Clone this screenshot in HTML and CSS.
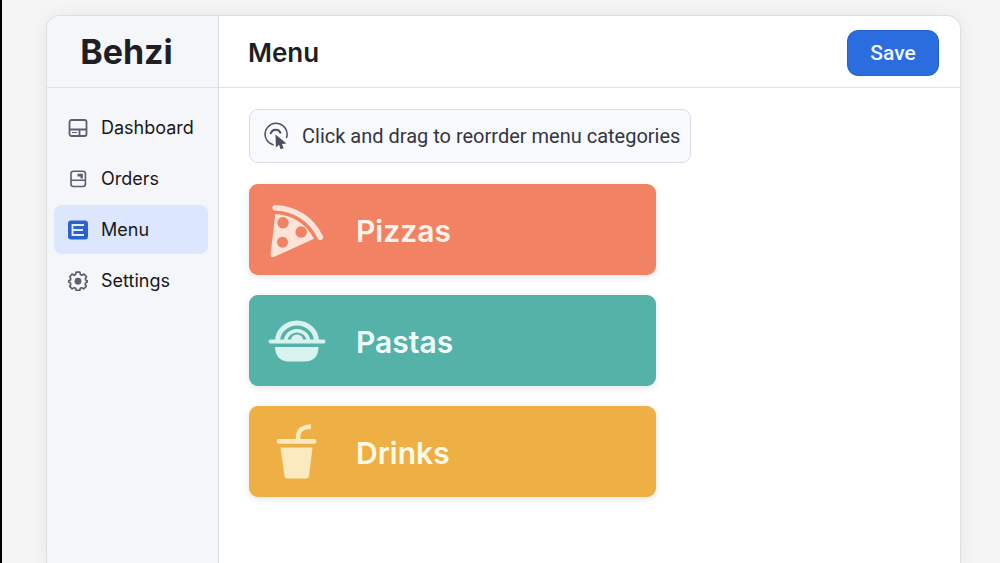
FILE: index.html
```html
<!DOCTYPE html>
<html lang="en">
<head>
<meta charset="utf-8">
<meta name="viewport" content="width=device-width, initial-scale=1">
<title>Behzi – Menu</title>
<link rel="stylesheet" href="styles.css">
</head>
<body>
<div class="app">
  <aside class="sidebar">
    <div class="brand">Behzi</div>
    <nav class="nav">
      <a class="nav-link" href="#dashboard">
        <svg class="nav-icon" viewBox="0 0 20 20" fill="none" stroke="#5b606e" stroke-width="1.8"><rect x="1.5" y="2" width="17" height="16" rx="2"/><path d="M1.5 11.5h17M11.5 11.5V18"/><path d="M4 14.5h5" stroke-width="1.2"/></svg>
        Dashboard
      </a>
      <a class="nav-link" href="#orders">
        <svg class="nav-icon" viewBox="0 0 20 20" fill="none" stroke="#5b606e" stroke-width="1.6"><rect x="3" y="2.3" width="14.4" height="15.2" rx="2.4"/><path d="M3 11.3h14.4"/><path d="M9.5 4.800h5.400v4.800h-2.400V7.400H9.500z" fill="#5b606e" stroke="none"/></svg>
        Orders
      </a>
      <a class="nav-link active" href="#menu" aria-current="page">
        <svg class="nav-icon" viewBox="0 0 20 20"><rect x="0" y="0.5" width="20" height="19" rx="3" fill="#2a63d0"/><path d="M16 5H4.500v10H16M4.500 10H15" fill="none" stroke="#e6efff" stroke-width="1.8"/></svg>
        Menu
      </a>
      <a class="nav-link" href="#settings">
        <svg class="nav-icon" viewBox="0 0 20 20"><path d="M8.100 1.200h3.800l.5 2.400 1.500.7 2.200-1.200 2.400 2.700-1.200 2 .5 1.400 1.700.7v1l-1.800.8-.5 1.500 1.100 2-2.500 2.600-2.100-1.100-1.400.6-.5 2H8.200l-.5-2-1.500-.6-2.100 1.100-2.500-2.600 1.200-2-.6-1.500L.6 11V9.800l1.700-.7.5-1.400-1.100-2 2.400-2.700 2.100 1.300 1.400-.7z" fill="none" stroke="#5b606e" stroke-width="1.700" stroke-linejoin="round"/><circle cx="10" cy="10.200" r="3.400" fill="#5b606e"/></svg>
        Settings
      </a>
    </nav>
  </aside>
  <main class="main">
    <header class="topbar">
      <h1 class="title">Menu</h1>
      <button class="save" type="button">Save</button>
    </header>
    <div class="content">
      <p class="hint">
        <svg class="hint-icon" viewBox="0 0 26 30"><g fill="none" stroke="#4b4f62" stroke-width="1.500" stroke-linecap="round"><path d="M9 23.800A11 11 0 1 1 22.600 16.500"/><path d="M6.800 12.300a5.200 5.200 0 0 1 9.600-.6" stroke-width="2"/></g><path d="M11.500 13.500l.4 13 3.200-2.800 1.500 4.600 3-1-1.600-4.400 4.500-.4z" fill="#4b4f62"/></svg>
        Click and drag to reorrder menu categories
      </p>
      <ul class="categories">
        <li class="category pizzas">
          <svg class="category-icon" viewBox="-1 -2 58 58"><path d="M7 4.500C26 5.500 42 15 50.500 33" fill="none" stroke="currentColor" stroke-width="5.500" stroke-linecap="round"/><path fill="currentColor" fill-rule="evenodd" d="M7 10.500C24 11.500 37 20 44.500 34.500L6 52q-4 1.200-3.500-2.500zM14.500 13.500a5.500 5.500 0 1 0 .01 0zM32 22.500a5.500 5.500 0 1 0 .01 0zM14 32.500a5.300 5.300 0 1 0 .01 0z"/></svg>
          Pizzas
        </li>
        <li class="category pastas">
          <svg class="category-icon" viewBox="-1 0 60 60"><g fill="none" stroke="currentColor"><path d="M9.500 29.500a19.500 18.500 0 0 1 39 0" stroke-width="5"/><path d="M17.500 29.500a11.500 10.800 0 0 1 23 0" stroke-width="3.500"/><path d="M2.500 29.500h53" stroke-width="4" stroke-linecap="round"/></g><path d="M23 28a6 5.500 0 0 1 12 0z" fill="currentColor"/><path d="M7 35h43.500q0 14-14 14.500H21Q7.500 49 7 35z" fill="currentColor"/></svg>
          Pastas
        </li>
        <li class="category drinks">
          <svg class="category-icon" viewBox="-1 2 60 60"><path d="M30 18c0-9 3-11.500 13-12.500" fill="none" stroke="currentColor" stroke-width="4.500"/><rect x="8.500" y="18" width="40" height="4.800" rx="2.400" fill="currentColor"/><path d="M12.500 26.500h32L41 55q-.4 2.500-3 2.500H19.500q-2.700 0-3-2.500z" fill="currentColor"/></svg>
          Drinks
        </li>
      </ul>
    </div>
  </main>
</div>
</body>
</html>
```
FILE: styles.css
```css
* {
  box-sizing: border-box;
}

body {
  display: flex;
  min-height: 100vh;
  margin: 0;
  padding: 15px 39px 0 44px;
  border-left: 2px solid #000;
  background: #f5f5f5;
  color: #1e1f24;
  font-family: Inter, "Liberation Sans", sans-serif;
}

.app {
  display: flex;
  flex: 1;
  border: 1px solid #dddee1;
  border-bottom: 0;
  border-radius: 14px 14px 0 0;
  background: #fff;
  box-shadow: 0 2px 18px rgba(0, 0, 0, 0.07);
  overflow: hidden;
}

.sidebar {
  flex: 0 0 172px;
  border-right: 1px solid #dcdde1;
  background: #f5f6f9;
}

.brand,
.topbar {
  display: flex;
  align-items: center;
  height: 72px;
  border-bottom: 1px solid #e1e2e5;
}

.brand {
  justify-content: center;
  padding-right: 12px;
  font-size: 34px;
  font-weight: 700;
}

.nav {
  display: flex;
  flex-direction: column;
  gap: 2px;
  padding: 15px 10px 15px 7px;
}

.nav-link {
  display: flex;
  align-items: center;
  gap: 13px;
  height: 49px;
  padding: 0 14px;
  border-radius: 8px;
  color: #17181c;
  font-size: 18px;
  text-decoration: none;
}

.nav-link.active {
  background: #dce6fe;
}

.nav-icon {
  flex: none;
  width: 20px;
  height: 20px;
}

.main {
  flex: 1;
}

.topbar {
  justify-content: space-between;
  padding: 2px 21px 0 29px;
}

.title {
  margin: 0;
  font-size: 26px;
  font-weight: 600;
}

.save {
  width: 92px;
  height: 46px;
  border: 1px solid #2461cf;
  border-radius: 11px;
  background: #2b6cde;
  color: #f1f8ff;
  font: 500 21px Roboto, "Liberation Sans", sans-serif;
}

.content {
  padding: 21px 30px;
}

.hint {
  display: flex;
  align-items: center;
  gap: 12px;
  width: fit-content;
  height: 54px;
  margin: 0 0 21px;
  padding: 0 10px 0 14px;
  border: 1px solid #dadbe3;
  border-radius: 9px;
  background: #f9fafe;
  color: #34353f;
  font: 20px Roboto, "Liberation Sans", sans-serif;
}

.hint-icon {
  width: 26px;
  height: 30px;
}

.categories {
  display: flex;
  flex-direction: column;
  gap: 20px;
  max-width: 407px;
  margin: 0;
  padding: 0;
  list-style: none;
}

.category {
  display: flex;
  align-items: center;
  gap: 29px;
  height: 91px;
  padding: 2px 18px 0;
  border-radius: 9px;
  box-shadow: 0 2px 6px rgba(40, 50, 90, 0.12);
  font-size: 30px;
  font-weight: 600;
}

.category-icon {
  width: 60px;
  height: 60px;
}

.pizzas {
  background: #f28264;
  color: #fff3eb;
}

.pizzas .category-icon {
  color: #fde3d8;
}

.pastas {
  background: #55b2a9;
  color: #f0fffc;
}

.pastas .category-icon {
  color: #d8f3ef;
}

.drinks {
  background: #eeb045;
  color: #fffae8;
}

.drinks .category-icon {
  color: #fbe9c0;
}
```
